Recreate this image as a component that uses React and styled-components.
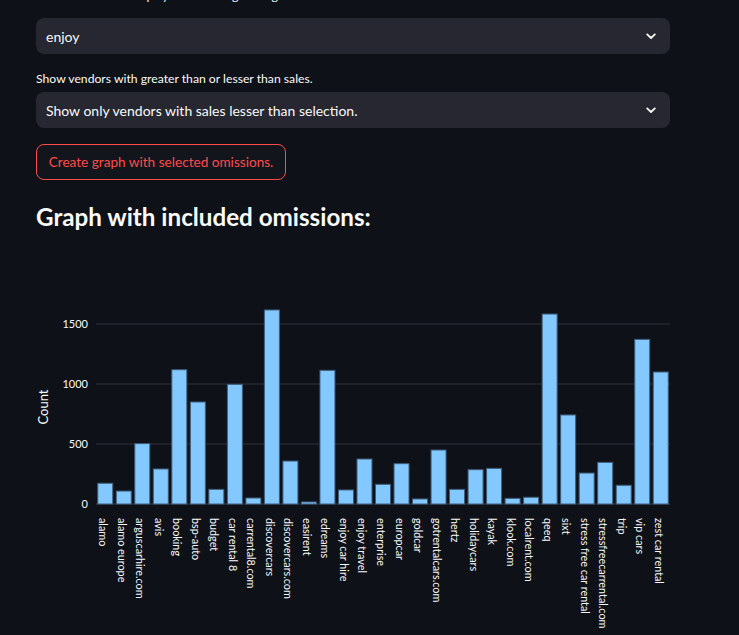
import React from "react";
import styled, { createGlobalStyle } from "styled-components";

const GlobalStyle = createGlobalStyle`
  html, body {
    margin: 0;
    padding: 0;
    background: #0e1117;
    overflow: hidden;
  }
  body {
    font-family: Lato, "Noto Sans", sans-serif;
    color: #fafafa;
  }
`;

const Page = styled.div`
  width: 739px;
  height: 635px;
  overflow: hidden;
  background: #0e1117;
`;

const Main = styled.div`
  width: 634px;
  margin-left: 36px;
  margin-top: -13px;
  display: flex;
  flex-direction: column;
`;

const Label = styled.div`
  font-size: 12.2px;
  line-height: 18px;
  height: 18px;
  margin-bottom: ${(p) => p.$gap || 4}px;
  color: #fafafa;
  white-space: nowrap;
`;

const Select = styled.div`
  height: 36px;
  background: #262730;
  border-radius: 8px;
  display: flex;
  align-items: center;
  justify-content: space-between;
  padding: 0 14px 0 10px;
  box-sizing: border-box;
  font-size: 14px;
  color: #fafafa;
  margin-bottom: ${(p) => p.$gap || 0}px;
`;

const Chevron = () => (
  <svg width="10" height="7" viewBox="0 0 10 7">
    <path d="M1.2 1.4 L5 5 L8.8 1.4" fill="none" stroke="#fafafa" strokeWidth="1.8" strokeLinecap="round" strokeLinejoin="round" />
  </svg>
);

const Button = styled.button`
  align-self: flex-start;
  height: 36px;
  width: 250px;
  border: 1px solid #ff4b4b;
  border-radius: 8px;
  background: #12151c;
  color: #ff4b4b;
  font-family: Lato, "Noto Sans", sans-serif;
  font-size: 13.6px;
  white-space: nowrap;
  padding: 0;
  margin-bottom: 21px;
`;

const Heading = styled.h3`
  margin: 0;
  font-size: 24.2px;
  font-weight: 700;
  line-height: 32px;
  color: #fafafa;
`;

const ChartWrap = styled.div`
  margin-top: 4px;
  height: 420px;
`;

const data = [
  ["alamo", 173], ["alamo europe", 108], ["arguscarhire.com", 503], ["avis", 292],
  ["booking", 1119], ["bsp-auto", 850], ["budget", 122], ["car rental 8", 997],
  ["carrental8.com", 50], ["discovercars", 1617], ["discovercars.com", 358],
  ["easirent", 17], ["edreams", 1114], ["enjoy car hire", 117], ["enjoy travel", 375],
  ["enterprise", 164], ["europcar", 336], ["goldcar", 42], ["gotrentalcars.com", 450],
  ["hertz", 122], ["holidaycars", 286], ["kayak", 297], ["klook.com", 47],
  ["localrent.com", 56], ["qeeq", 1583], ["sixt", 742], ["stress free car rental", 258],
  ["stressfreecarrental.com", 347], ["trip", 156], ["vip cars", 1372], ["zest car rental", 1100],
];

// plot area in svg coords
const X0 = 60;
const X1 = 634;
const Y0 = 267;
const SCALE = 0.12;

const Chart = () => {
  const band = (X1 - X0) / data.length;
  const barW = band * 0.81;
  return (
    <svg width="634" height="420" viewBox="0 0 634 420" fontFamily="Lato, 'Noto Sans', sans-serif">
      {[500, 1000, 1500].map((v) => (
        <line key={v} x1={X0} x2={X1} y1={Y0 - v * SCALE} y2={Y0 - v * SCALE} stroke="#31333f" strokeWidth="1" />
      ))}
      <line x1={X0} x2={X1} y1={Y0} y2={Y0} stroke="#3a3d4a" strokeWidth="1" />
      {[0, 500, 1000, 1500].map((v) => (
        <text key={v} x={X0 - 8} y={Y0 - v * SCALE + 4} fontSize="11" fill="#fafafa" textAnchor="end">
          {v}
        </text>
      ))}
      <text transform={`translate(12 170) rotate(-90)`} fontSize="13" fill="#fafafa" textAnchor="middle">
        Count
      </text>
      {data.map(([name, v], i) => {
        const cx = X0 + band * i + band / 2;
        const h = v * SCALE;
        return (
          <g key={name}>
            <rect x={cx - barW / 2} y={Y0 - h} width={barW} height={h} fill="#83c9ff" stroke="#3e5c78" strokeWidth="1" />
            <text transform={`translate(${cx - 6} ${Y0 + 14}) rotate(90)`} fontSize="10.8" fill="#fafafa">
              {name}
            </text>
          </g>
        );
      })}
      <text x="298" y="410" fontSize="13" fill="#fafafa" textAnchor="middle">Value</text>
    </svg>
  );
};

export default function App() {
  return (
    <Page>
      <GlobalStyle />
      <Main>
        <Label $gap={13}>Select vendors to display and the range of highest sales.</Label>
        <Select $gap={16}>
          <span>enjoy</span>
          <Chevron />
        </Select>
        <Label>Show vendors with greater than or lesser than sales.</Label>
        <Select $gap={16}>
          <span>Show only vendors with sales lesser than selection.</span>
          <Chevron />
        </Select>
        <Button>Create graph with selected omissions.</Button>
        <Heading>Graph with included omissions:</Heading>
        <ChartWrap>
          <Chart />
        </ChartWrap>
      </Main>
    </Page>
  );
}
